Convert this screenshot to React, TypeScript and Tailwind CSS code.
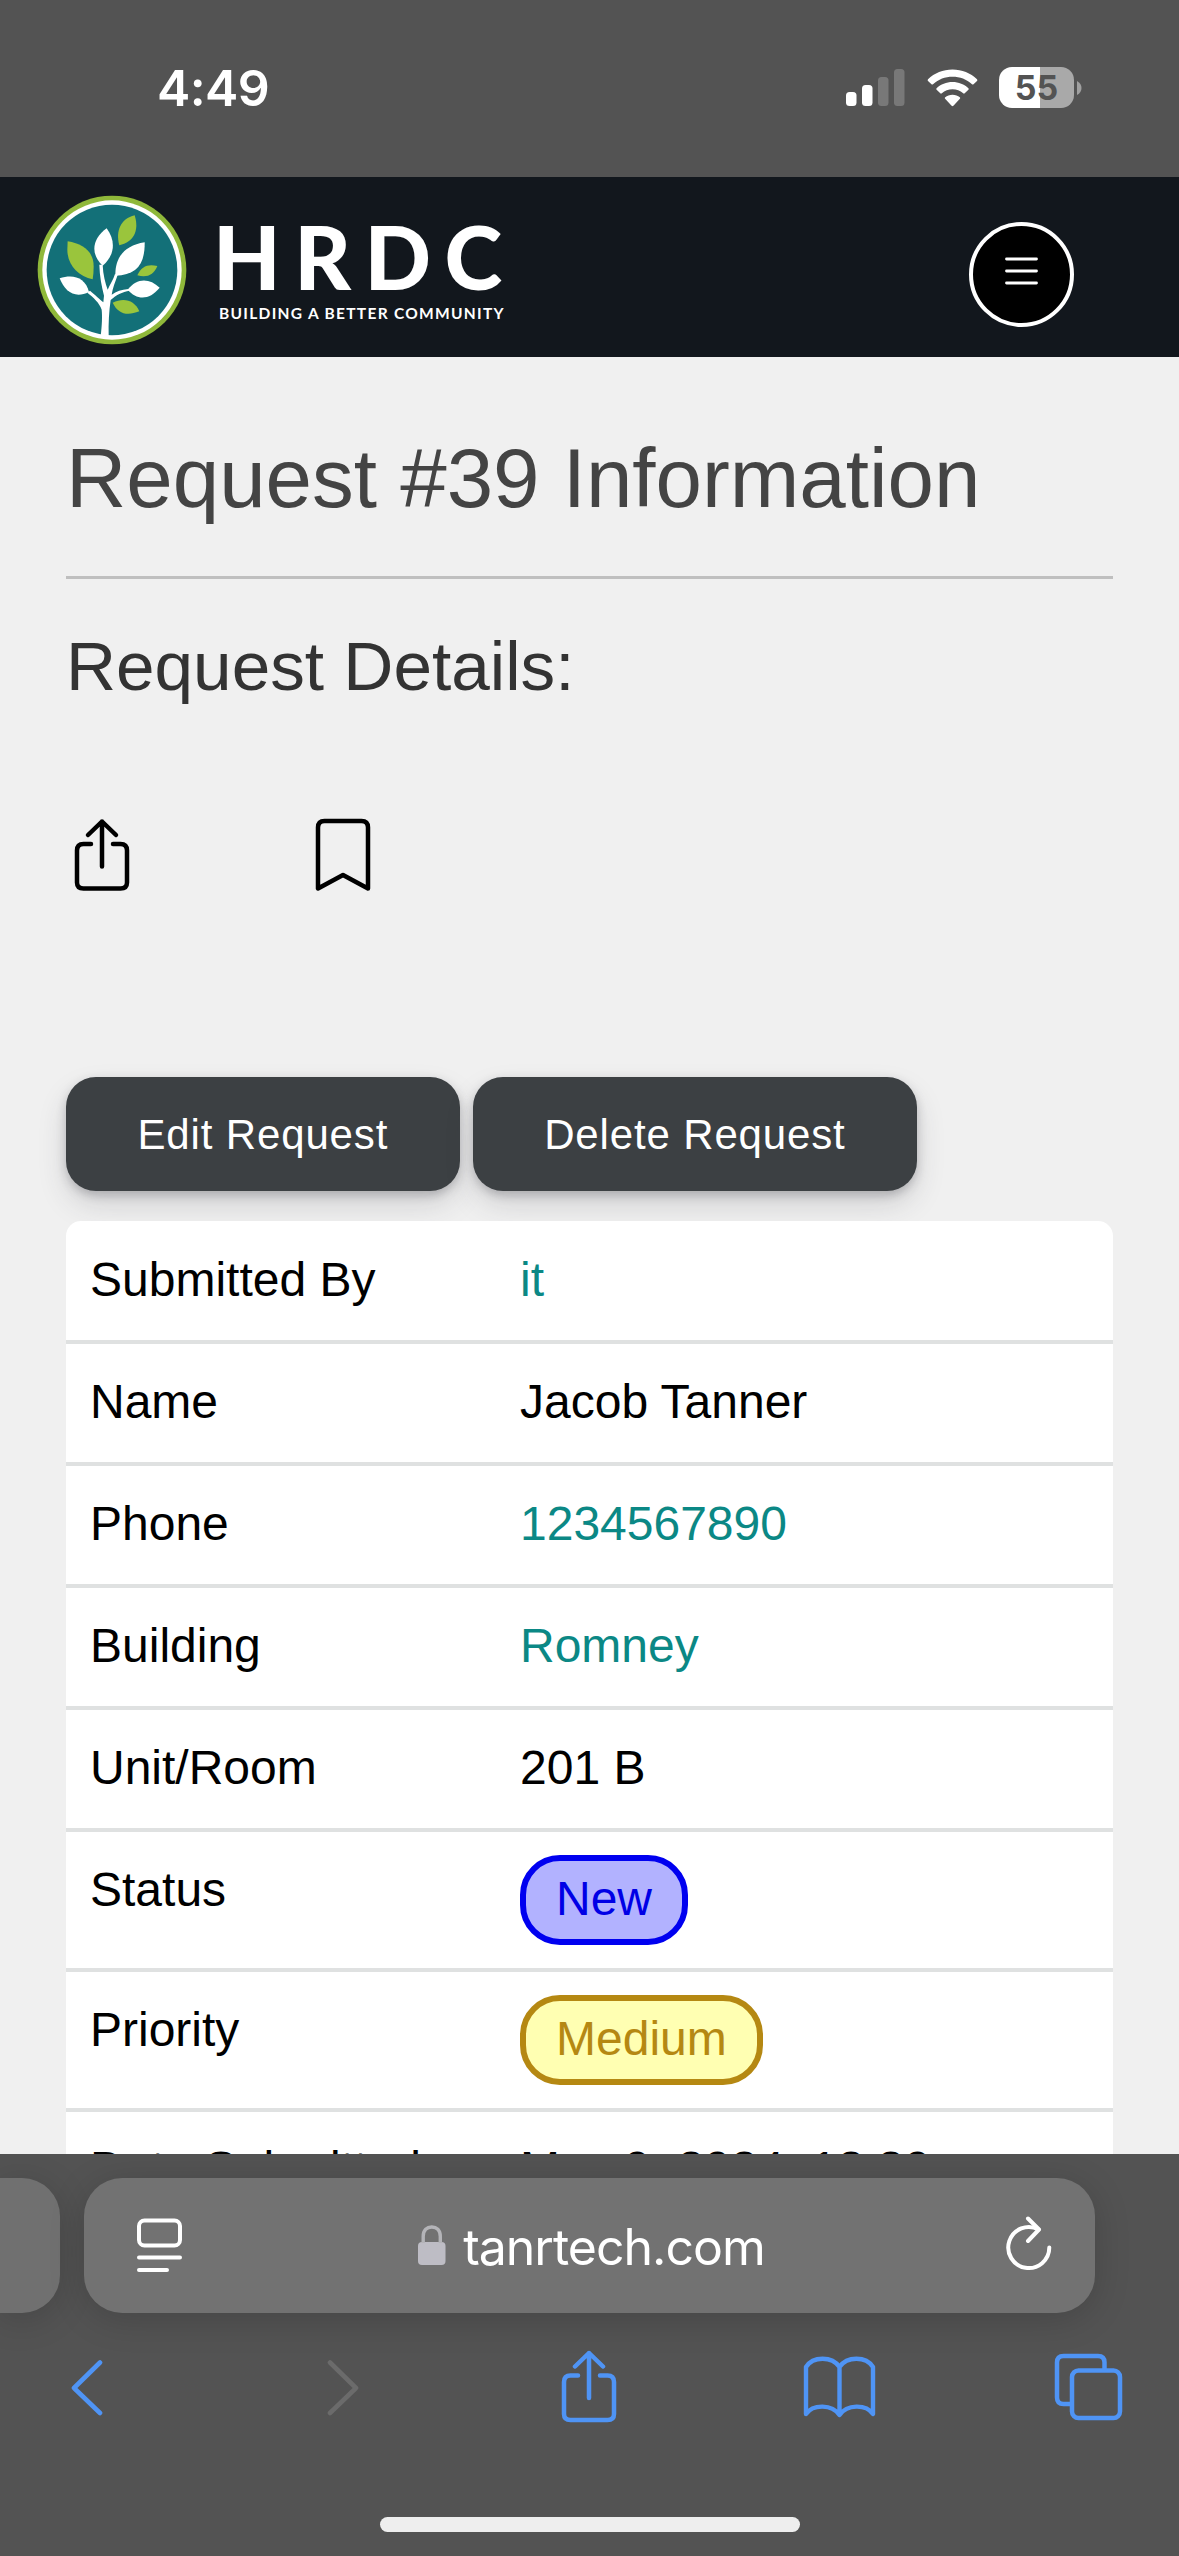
import type { ReactNode } from 'react';

const ARIAL = "font-['Liberation_Sans',Arial,sans-serif]";

function StatusBar() {
  return (
    <header className="flex h-[177px] shrink-0 items-start justify-between bg-[#535353] pr-[97px] pl-[157px] text-white">
      <span className="mt-[58px] font-['Inter',sans-serif] text-[50px] leading-[60px] font-semibold tracking-[-0.6px]">4:49</span>
      <div className="mt-[67px] flex h-[41px] items-center">
        <svg className="h-[37px] w-[59px]" viewBox="0 0 59 37" fill="#fff">
          <rect x="0" y="23" width="10.5" height="14" rx="3.5" />
          <rect x="16" y="16" width="10.5" height="21" rx="3.5" />
          <rect x="32" y="8" width="10.5" height="29" rx="3.5" opacity=".22" />
          <rect x="48" y="0" width="10.5" height="37" rx="3.5" opacity=".22" />
        </svg>
        <svg className="ml-[22px] h-[38px] w-[51px]" viewBox="0 0 51 38" fill="#fff">
          <path d="M25.5 0.5C35 .5 43.500 4 50 10.300Q50.800 11.200 50 12L46.500 15.200Q45.800 15.900 45 15.200C39.500 10.100 33 7.700 25.500 7.700S11.500 10.100 6 15.200Q5.200 15.900 4.500 15.200L1 12Q.2 11.200 1 10.300C7.500 4 16 .5 25.500 .5Z" />
          <path d="M25.500 13C31.700 13 37.200 15.300 41.400 19.200Q42.200 20 41.400 20.800L37.700 24.300Q37 25 36.200 24.300C33.200 21.600 29.600 20.200 25.500 20.200S17.800 21.600 14.800 24.300Q14 25 13.300 24.300L9.600 20.800Q8.800 20 9.600 19.200C13.800 15.300 19.300 13 25.500 13Z" />
          <path d="M25.500 25.800C28.400 25.800 30.900 26.700 32.800 28.200Q33.700 29 32.900 29.800L26.400 36.800Q25.500 37.700 24.600 36.800L18.100 29.800Q17.300 29 18.200 28.200C20.100 26.700 22.600 25.800 25.500 25.800Z" />
        </svg>
        <div className="ml-[21px] flex h-[41px] w-[75px] items-center justify-center rounded-[13px] bg-[linear-gradient(90deg,#fff_55%,#a9a9a9_55%)] font-['Inter',sans-serif] text-[34px] leading-[41px] font-bold text-[#535353]">
          55
        </div>
        <svg className="ml-[3px] h-[14px] w-[5px]" viewBox="0 0 5 14" fill="#a0a0a0">
          <path d="M0 0Q4.500 2.500 4.500 7T0 14Z" />
        </svg>
      </div>
    </header>
  );
}

function TreeLogo() {
  return (
    <svg className="h-[150px] w-[150px]" viewBox="52 46 450 450">
      <circle cx="277" cy="271" r="223" fill="#8fb83a" />
      <circle cx="277" cy="271" r="209" fill="#fff" />
      <circle cx="277" cy="271" r="196" fill="#137078" />
      <g fill="#9ac53c">
        <path d="M144 185C190 193 222 215 222 260Q222 280 219 299C175 290 143 255 143 210Z" />
        <path d="M345 107C360 155 340 188 299 197C287 155 303 117 345 107Z" />
        <path d="M413 259C402 286 382 295 353 287C365 260 385 252 413 259Z" />
        <path d="M279 369C314 353 344 362 359 395C321 410 295 402 279 369Z" />
      </g>
      <g fill="#fff">
        <path d="M261 146C288 182 287 226 249 258C213 224 215 180 261 146Z" />
        <path d="M375 188C376 254 351 286 287 288C286 234 313 198 375 188Z" />
        <path d="M120 296C160 282 197 293 208 337C166 358 136 337 120 296Z" />
        <path d="M420 324C388 363 351 361 324 330C352 293 390 295 420 324Z" />
        <path d="M243 470C247 435 248 410 246 390C240 370 220 352 203 339L211 333C224 344 242 360 251 368L253 348C246 320 240 290 239 255L249 255C250 285 257 310 264 330C272 312 281 300 286 283L294 286C287 306 279 325 276 345C290 335 305 330 326 328L330 333C308 336 288 347 273 361C268 395 266 430 267 470Z" />
      </g>
    </svg>
  );
}

function SiteHeader() {
  return (
    <div className="flex h-[180px] shrink-0 items-start justify-between bg-[#12171d] pr-[105px] pl-[37px]">
      <div className="flex">
        <div className="mt-[18px]">
          <TreeLogo />
        </div>
        <div className="ml-[26px] flex flex-col font-['Lato',sans-serif] text-white">
          <span className="mt-[36px] h-[88px] text-[87.500px] leading-[87px] font-black tracking-[13.500px]">HRDC</span>
          <span className="ml-[6px] text-[15.500px] leading-[24px] font-bold tracking-[1.300px] whitespace-nowrap">BUILDING A BETTER COMMUNITY</span>
        </div>
      </div>
      <button className="mt-[45px] flex h-[105px] w-[105px] justify-center rounded-full border-4 border-white bg-black pt-[30px]" aria-label="Menu">
        <svg className="h-[30px] w-[33px]" viewBox="0 0 33 30" stroke="#fff" strokeWidth="2.800" strokeLinecap="round">
          <path d="M1.500 3H31.500M1.500 15H31.500M1.500 27H31.500" />
        </svg>
      </button>
    </div>
  );
}

function ShareIcon({ className }: { className: string }) {
  return (
    <svg className={className} viewBox="0 0 56 73" fill="none" stroke="currentColor" strokeWidth="4.500" strokeLinecap="round" strokeLinejoin="round">
      <path d="M17 25.500H9.500Q3 25.500 3 32V64Q3 70 9.500 70H46.500Q53 70 53 64V32Q53 25.500 46.500 25.500H39" />
      <path d="M28 48V3M14 16.500L28 3L42 16.500" />
    </svg>
  );
}

function ActionButton({ children }: { children: ReactNode }) {
  return (
    <button className="h-[114px] rounded-[30px] bg-[#3c4043] px-[71.500px] text-[42px] tracking-[0.850px] text-white shadow-[0_4px_10px_rgba(50,50,60,0.25),0_14px_30px_-2px_rgba(50,50,60,0.18)]">
      {children}
    </button>
  );
}

function Row({ label, size = 'h-[122px]', top = 'pt-[31px]', badge = false, children }: { label: string; size?: string; top?: string; badge?: boolean; children: ReactNode }) {
  return (
    <div className={`flex shrink-0 border-b-4 border-[#dfe1e1] pl-6 text-[48px] leading-[54px] ${size}`}>
      <div className={`w-[430px] ${top}`}>{label}</div>
      <div className={badge ? 'pt-[23px]' : top}>{children}</div>
    </div>
  );
}

function Link({ children }: { children: ReactNode }) {
  return <a className="text-[#0b8885]">{children}</a>;
}

function RequestPage() {
  return (
    <main className={`flex h-[1797px] shrink-0 flex-col overflow-hidden bg-[#f0f0f0] px-[66px] ${ARIAL}`}>
      <h1 className="mt-[73px] text-[83.500px] leading-[96px] whitespace-nowrap text-[#444]">Request #39 Information</h1>
      <hr className="mt-[50px] h-[3px] shrink-0 border-0 bg-[#bfbfbf]" />
      <h2 className="mt-[47px] text-[69.300px] leading-[80px] whitespace-nowrap text-[#333]">Request Details:</h2>
      <div className="mt-[112px] flex h-[74px] shrink-0 items-start pl-[8px] text-black">
        <ShareIcon className="h-[74px] w-[56px]" />
        <svg className="ml-[185px] h-[74px] w-[56px]" viewBox="0 0 56 74" fill="none" stroke="currentColor" strokeWidth="4.500" strokeLinejoin="round">
          <path d="M3 70.500V9.500Q3 3 9.500 3H46.500Q53 3 53 9.500V70.500L28 57Z" />
        </svg>
      </div>
      <div className="mt-[185px] flex shrink-0 gap-[13px]">
        <ActionButton>Edit Request</ActionButton>
        <ActionButton>Delete Request</ActionButton>
      </div>
      <div className="relative mt-[30px] flex flex-col rounded-t-[15px] bg-white text-black">
        <Row label="Submitted By" size="h-[123px]" top="pt-[32px]"><Link>it</Link></Row>
        <Row label="Name">Jacob Tanner</Row>
        <Row label="Phone"><Link>1234567890</Link></Row>
        <Row label="Building"><Link>Romney</Link></Row>
        <Row label="Unit/Room">201 B</Row>
        <Row label="Status" size="h-[140px]" badge>
          <div className="rounded-[40px] border-[6px] border-[#0000f0] bg-[#b2b2ff] px-[30px] pt-[11px] pb-[13px] text-[#0000e6]">New</div>
        </Row>
        <Row label="Priority" size="h-[140px]" badge>
          <div className="rounded-[40px] border-[6px] border-[#b58812] bg-[#ffffb2] px-[30px] pt-[11px] pb-[13px] text-[#b58812]">Medium</div>
        </Row>
        <Row label="Date Submitted" top="pt-[30px]">May 9, 2024, 12:39 p.m.</Row>
      </div>
    </main>
  );
}

function BrowserChrome() {
  return (
    <footer className="flex h-[402px] shrink-0 flex-col overflow-hidden bg-[#535353]">
      <div className="mt-[24px] flex h-[135px] shrink-0 gap-[24px]">
        <div className="w-[60px] rounded-r-[38px] bg-[#707070] shadow-[0_6px_36px_rgba(0,0,0,0.16)]" />
        <div className="flex w-[1011px] items-center rounded-[38px] bg-[#727272] pr-[43px] pl-[53px] shadow-[0_6px_36px_rgba(0,0,0,0.16)]">
          <svg className="h-[55px] w-[45px]" viewBox="0 0 45 55" fill="none" stroke="#fff" strokeWidth="4" strokeLinecap="round">
            <rect x="2" y="2.500" width="41" height="25" rx="5.500" />
            <path d="M2 39.500H43M2 52H30" />
          </svg>
          <div className="flex flex-1 items-center justify-center pr-[5px]">
            <svg className="-mt-[2px] h-[40px] w-[28px]" viewBox="0 0 28 40">
              <rect x="0" y="17" width="27.500" height="23" rx="4" fill="#bebdc5" />
              <path d="M5.200 18V11.500C5.200 5 9 2 13.750 2S22.300 5 22.300 11.500V18" fill="none" stroke="#b4b4b8" strokeWidth="3.400" />
            </svg>
            <span className="mt-[2px] ml-[17px] font-['Inter',sans-serif] text-[50px] leading-[60px] tracking-[-1px] text-white">tanrtech.com</span>
          </div>
          <svg className="-mt-[4px] h-[55px] w-[46px]" viewBox="0 0 46 55" fill="none" stroke="#fff" strokeWidth="4" strokeLinecap="round" strokeLinejoin="round">
            <path d="M43.300 31.500A20.500 20.500 0 1 1 32.500 13.500" />
            <path d="M22 2.500L33 13.500L22 25" />
          </svg>
        </div>
      </div>
      <nav className="mt-[34px] flex h-[80px] shrink-0 items-center pl-[70px] text-[#4f94f5]">
        <svg className="h-[57px] w-[33px]" viewBox="0 0 33 57" fill="none" stroke="currentColor" strokeWidth="4.600" strokeLinecap="round" strokeLinejoin="round">
          <path d="M30 3.500L4 29L30 54" />
        </svg>
        <svg className="ml-[224px] h-[57px] w-[33px]" viewBox="0 0 33 57" fill="none" stroke="#6b6b6b" strokeWidth="4.600" strokeLinecap="round" strokeLinejoin="round">
          <path d="M3 3.500L29 29L3 54" />
        </svg>
        <ShareIcon className="ml-[200px] -mt-[2px] h-[73px] w-[58px]" />
        <svg className="ml-[185px] h-[62px] w-[73px]" viewBox="0 0 73 62" fill="none" stroke="currentColor" strokeWidth="4.400" strokeLinejoin="round">
          <path d="M36.500 11C29 0 10 0 3 11V58C10 48 29 48 36.500 59C44 48 63 48 70 58V11C63 0 44 0 36.500 11ZM36.500 11V59" />
        </svg>
        <svg className="ml-[178px] h-[68px] w-[69px]" viewBox="0 0 69 68" fill="none" stroke="currentColor" strokeWidth="4.500">
          <rect x="18" y="17.500" width="48" height="47.500" rx="6.500" />
          <path d="M18 51H9.500Q3 51 3 44.500V9.500Q3 3 9.500 3H44Q50.500 3 50.500 9.500V17.500" />
        </svg>
      </nav>
      <div className="mt-[90px] ml-[380px] h-[15px] w-[420px] shrink-0 rounded-full bg-[#eee]" />
    </footer>
  );
}

export default function App() {
  return (
    <div className="flex h-[2556px] w-[1179px] flex-col overflow-hidden">
      <StatusBar />
      <SiteHeader />
      <RequestPage />
      <BrowserChrome />
    </div>
  );
}
